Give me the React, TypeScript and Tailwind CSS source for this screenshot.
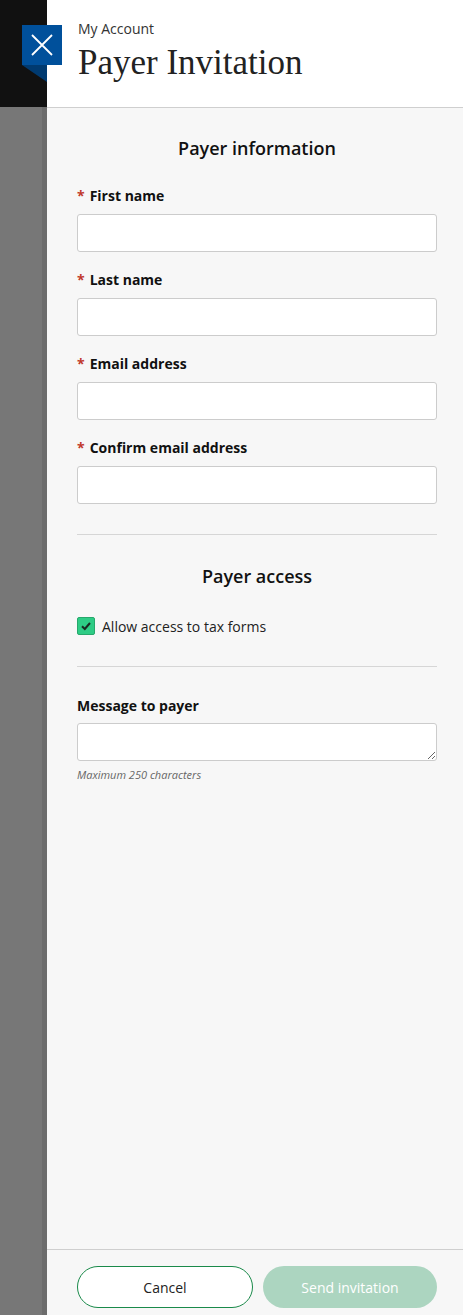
import React from "react";

const sans = { fontFamily: '"Open Sans", "Noto Sans", sans-serif' };

function Field({ label }: { label: string }) {
  return (
    <div className="flex flex-col">
      <label className="text-[14px] font-bold text-[#111] leading-[20px] h-[20px] flex items-center">
        <span className="text-[#c0392b] mr-[5px]">*</span>
        {label}
      </label>
      <input className="mt-[8px] h-[38px] w-full bg-white border border-[#cccccc] rounded-[3px]" />
    </div>
  );
}

export default function App() {
  return (
    <div className="w-[463px] h-[1315px] flex overflow-hidden" style={sans}>
      <div className="w-[47px] flex flex-col relative">
        <div className="h-[107px] bg-[#111111]" />
        <div className="flex-1 bg-[#777777] flex justify-end">
          <div className="w-[5px] bg-[#6c6c6c]" />
        </div>
        <div className="absolute left-[22px] top-[25px] w-[40px] flex flex-col z-10">
          <div className="w-[40px] h-[40px] bg-[#00509b] flex items-center justify-center">
            <svg width="24" height="24" viewBox="0 0 24 24">
              <path d="M2 2 L22 22 M22 2 L2 22" stroke="white" strokeWidth="1.8" />
            </svg>
          </div>
          <svg width="25" height="17" viewBox="0 0 25 17">
            <polygon points="0,0 25,0 25,17" fill="#003a70" />
          </svg>
        </div>
      </div>
      <div className="flex-1 flex flex-col bg-[#f7f7f7]">
        <div className="h-[108px] bg-white border-b border-[#cfcfcf] pl-[31px] pt-[19px]">
          <div className="text-[14px] text-[#333] leading-[20px]">My Account</div>
          <div
            className="text-[35px] text-[#222] leading-[40px] mt-[4px]"
            style={{ fontFamily: '"Liberation Serif", serif' }}
          >
            Payer Invitation
          </div>
        </div>
        <div className="flex-1 pl-[30px] pr-[26px] pt-[27px]">
          <h2 className="text-[18px] text-[#111] text-center leading-[26px] font-semibold">Payer information</h2>
          <div className="mt-[25px] flex flex-col gap-[18px]">
            <Field label="First name" />
            <Field label="Last name" />
            <Field label="Email address" />
            <Field label="Confirm email address" />
          </div>
          <div className="mt-[30px] border-t border-[#d6d6d6]" />
          <h2 className="mt-[28px] text-[18px] text-[#111] text-center leading-[26px] font-semibold">Payer access</h2>
          <label className="mt-[27px] flex items-center h-[20px]">
            <span className="w-[18px] h-[18px] rounded-[2px] bg-[#2ecc85] border border-[#27a86c] flex items-center justify-center">
              <svg width="12" height="12" viewBox="0 0 12 12">
                <path d="M2 6.2 L4.8 9 L10 3" stroke="#1a2a22" strokeWidth="2" fill="none" />
              </svg>
            </span>
            <span className="ml-[7px] text-[14px] text-[#222]">Allow access to tax forms</span>
          </label>
          <div className="mt-[30px] border-t border-[#d6d6d6]" />
          <div className="mt-[29px] text-[14px] font-bold text-[#111] leading-[20px]">Message to payer</div>
          <textarea className="mt-[7px] block w-full h-[38px] bg-white border border-[#cccccc] rounded-[3px] resize-y" />
          <div className="mt-[6px] text-[11px] italic text-[#666] leading-[16px]">Maximum 250 characters</div>
        </div>
        <div className="h-[66px] border-t border-[#cfcfcf] pl-[30px] pr-[26px] pt-[16px] flex gap-[10px]">
          <button className="flex-1 h-[42px] rounded-full border border-[#1a8a4a] bg-white text-[14px] text-[#222]">
            Cancel
          </button>
          <button className="flex-1 h-[42px] rounded-full bg-[#acd5c0] text-[14px] text-white">
            Send invitation
          </button>
        </div>
      </div>
    </div>
  );
}
